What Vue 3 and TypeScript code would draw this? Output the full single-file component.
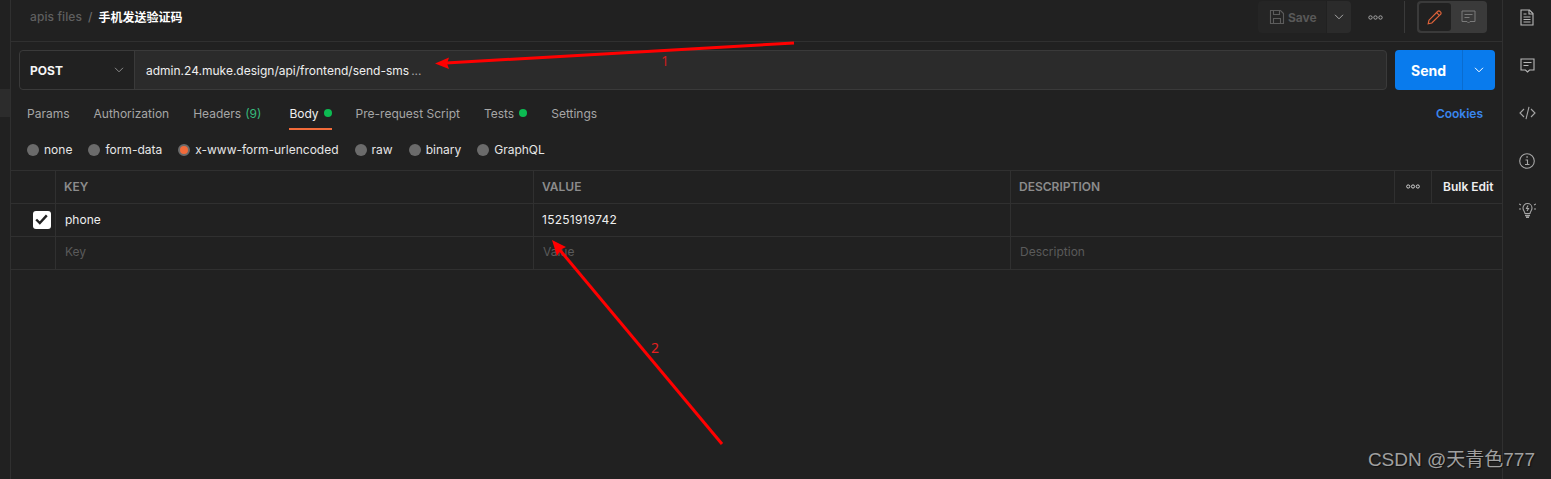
<script setup lang="ts">
const tabs = [
  { label: 'Params' },
  { label: 'Authorization' },
  { label: 'Headers', count: '(9)' },
  { label: 'Body', dot: true, active: true },
  { label: 'Pre-request Script' },
  { label: 'Tests', dot: true },
  { label: 'Settings' },
]
const radios = [
  { label: 'none' },
  { label: 'form-data' },
  { label: 'x-www-form-urlencoded', on: true },
  { label: 'raw' },
  { label: 'binary' },
  { label: 'GraphQL' },
]
</script>

<template>
  <div class="app">
    <aside class="left"><div class="left-mark"></div></aside>

    <main class="main">
      <header class="top">
        <div class="crumbs">
          <span class="crumb-dim">apis files</span>
          <span class="crumb-sep">/</span>
          <span class="crumb-name">手机发送验证码</span>
        </div>
        <div class="actions">
          <div class="save">
            <svg width="16" height="16" viewBox="0 0 16 16" fill="none" stroke="#5c5c5c" stroke-width="1.1">
              <path d="M1.5 1.5h10l3 3v10h-13z" />
              <path d="M4.5 1.5v4h6v-4M4.5 14.5v-5h7v5" />
            </svg>
            <span>Save</span>
          </div>
          <div class="save-more">
            <svg width="10" height="6" viewBox="0 0 10 6" fill="none" stroke="#a6a6a6" stroke-width="1"><path d="M1 .8l4 4 4-4" /></svg>
          </div>
          <svg class="dots" width="15" height="5" viewBox="0 0 15 5" fill="none" stroke="#a6a6a6"><circle cx="2.500" cy="2.500" r="1.700" /><circle cx="7.500" cy="2.500" r="1.700" /><circle cx="12.500" cy="2.500" r="1.700" /></svg>
          <div class="vline"></div>
          <div class="toggle">
            <div class="toggle-on">
              <svg width="16" height="16" viewBox="0 0 16 16" fill="none" stroke="#e0633a" stroke-width="1.200">
                <path d="M1.200 14.800l.8-3.600 8.600-8.700a1.700 1.700 0 0 1 2.500 0l.4.4a1.700 1.700 0 0 1 0 2.500l-8.700 8.600z" />
                <path d="M9.600 3.600l2.800 2.800" />
              </svg>
            </div>
            <div class="toggle-off">
              <svg width="15" height="15" viewBox="0 0 15 15" fill="none" stroke="#7a7a7a" stroke-width="1">
                <path d="M1 1h13v10.500H9L7.500 13 6 11.500H1z" />
                <path d="M3.500 4.500h8M3.500 7.500h5" />
              </svg>
            </div>
          </div>
        </div>
      </header>

      <section class="url-row">
        <div class="url-box">
          <div class="method">
            <span>POST</span>
            <svg width="10" height="6" viewBox="0 0 10 6" fill="none" stroke="#8c8c8c" stroke-width="1"><path d="M1 .8l4 4 4-4" /></svg>
          </div>
          <div class="url-text"><span>admin.24.muke.design/api/frontend/send-sms</span><span class="ellipsis">...</span></div>
        </div>
        <div class="send">
          <div class="send-main">Send</div>
          <div class="send-more">
            <svg width="10" height="6" viewBox="0 0 10 6" fill="none" stroke="#fff" stroke-width="1"><path d="M1 .8l4 4 4-4" /></svg>
          </div>
        </div>
      </section>

      <nav class="tabs">
        <div v-for="t in tabs" :key="t.label" class="tab" :class="{ active: t.active }">
          <span>{{ t.label }}</span>
          <span v-if="t.count" class="count">{{ t.count }}</span>
          <span v-if="t.dot" class="dot"></span>
        </div>
        <div class="cookies">Cookies</div>
      </nav>

      <div class="radios">
        <label v-for="r in radios" :key="r.label" class="radio">
          <span class="knob" :class="{ on: r.on }"></span>{{ r.label }}
        </label>
      </div>

      <div class="table">
        <div class="cell first"></div>
        <div class="cell head key">KEY</div>
        <div class="cell head val">VALUE</div>
        <div class="cell head val">DESCRIPTION</div>
        <div class="cell center">
          <svg width="14" height="5" viewBox="0 0 14 5" fill="none" stroke="#d0d0d0"><circle cx="2.200" cy="2.500" r="1.600" /><circle cx="7" cy="2.500" r="1.600" /><circle cx="11.800" cy="2.500" r="1.600" /></svg>
        </div>
        <div class="cell bulk">Bulk Edit</div>

        <div class="cell first center">
          <span class="check">
            <svg width="13" height="11" viewBox="0 0 13 11" fill="none" stroke="#222" stroke-width="2.400"><path d="M1.200 5.500l3.600 3.600 7-7.700" /></svg>
          </span>
        </div>
        <div class="cell text key">phone</div>
        <div class="cell text val digits">15251919742</div>
        <div class="cell span3"></div>

        <div class="cell first"></div>
        <div class="cell ph key">Key</div>
        <div class="cell ph val">Value</div>
        <div class="cell ph val span3">Description</div>
      </div>
    </main>

    <aside class="right">
      <div class="rail">
        <svg width="14" height="17" viewBox="0 0 14 17" fill="none" stroke="#b8b8b8" stroke-width="1.100">
          <path d="M1 1h8.500L13 4.500V16H1z" /><path d="M9 1v4h4" /><path d="M3.500 5h3M3.500 8h7M3.500 10.500h7M3.500 13h7" />
        </svg>
      </div>
      <div class="rail">
        <svg width="15" height="15" viewBox="0 0 15 15" fill="none" stroke="#b8b8b8" stroke-width="1.100">
          <path d="M1 1h13v11H9.500L7.500 14l-2-2H1z" /><path d="M3.500 4.500h8M3.500 7.500h5" />
        </svg>
      </div>
      <div class="rail">
        <svg width="17" height="14" viewBox="0 0 17 14" fill="none" stroke="#a6a6a6" stroke-width="1.100">
          <path d="M5 3L1 7l4 4M12 3l4 4-4 4M10 .8L7 13.200" />
        </svg>
      </div>
      <div class="rail">
        <svg width="16" height="16" viewBox="0 0 16 16" fill="none" stroke="#a6a6a6" stroke-width="1.100">
          <circle cx="8" cy="8" r="7.300" /><path d="M6.500 7h2v4.500M6 11.500h4.500" /><path d="M7.400 4h1.400" stroke-width="1.600" />
        </svg>
      </div>
      <div class="rail">
        <svg width="17" height="17" viewBox="0 0 17 17" fill="none" stroke="#a6a6a6" stroke-width="1.100">
          <path d="M6 12.500c0-2-2-2.800-2-5.500a4.500 4.500 0 0 1 9 0c0 2.700-2 3.500-2 5.500z" />
          <path d="M6 14.500h5M7 16.300h3" stroke-width="1.500" />
          <path d="M9 4.500L7.500 7.500h2L8 10" />
          <path d="M0 3l2 1M0 8h2M17 3l-2 1M17 8h-2" />
        </svg>
      </div>
    </aside>

    <svg class="overlay" width="1551" height="479" viewBox="0 0 1551 479">
      <g fill="none" stroke="#ff0000" stroke-width="3">
        <path d="M794 43L446 63" />
        <path d="M722 444L559 249" />
      </g>
      <path d="M435 63.500l14-6-2 6 2 5.500z" fill="#ff0000" />
      <path d="M552 240l14 7-5 2.500-4 6.500z" fill="#ff0000" />
      <text x="661" y="66" class="note one">1</text>
      <text x="651" y="353" class="note">2</text>
    </svg>

    <div class="mark">CSDN @天青色777</div>
  </div>
</template>

<style>
html, body { margin: 0; background: #212121; }
</style>

<style scoped>
.app {
  position: relative;
  display: flex;
  width: 1551px;
  height: 479px;
  overflow: hidden;
  background: #212121;
  color: #f0f0f0;
  font-family: Inter, "Noto Sans CJK SC", sans-serif;
  font-size: 12px;
}
.left {
  width: 11px;
  flex: none;
  box-sizing: border-box;
  border-right: 1px solid #303030;
}
.left-mark {
  height: 28px;
  margin-top: 89px;
  background: #2c2c2c;
}
.main {
  flex: 1;
  min-width: 0;
  display: flex;
  flex-direction: column;
}
.right {
  width: 48px;
  flex: none;
  border-left: 1px solid #303030;
  display: flex;
  flex-direction: column;
  align-items: center;
  gap: 24px;
  padding-top: 5px;
}
.rail {
  width: 24px;
  height: 24px;
  display: flex;
  align-items: center;
  justify-content: center;
}
.top {
  height: 41px;
  border-bottom: 1px solid #303030;
  display: flex;
  justify-content: space-between;
  padding: 0 15px 0 19px;
  flex: none;
}
.crumbs {
  display: flex;
  align-items: center;
  gap: 6px;
  height: 33px;
  font-weight: 500;
}
.crumb-dim { color: #5f5f5f; letter-spacing: 0.1px; }
.crumb-sep { color: #6b6b6b; }
.crumb-name { color: #fff; font-weight: 700; }
.actions {
  display: flex;
  align-items: center;
  height: 32px;
  margin-top: 1px;
}
.save {
  width: 68px;
  height: 32px;
  box-sizing: border-box;
  padding-left: 11px;
  display: flex;
  align-items: center;
  gap: 3px;
  background: #252525;
  border-radius: 4px 0 0 4px;
  color: #585858;
  font-weight: 700;
}
.save-more {
  width: 24px;
  height: 32px;
  margin-left: 1px;
  display: flex;
  align-items: center;
  justify-content: center;
  background: #2b2b2b;
  border-radius: 0 4px 4px 0;
}
.dots { margin-left: 17px; }
.vline {
  width: 1px;
  height: 32px;
  background: #3a3a3a;
  margin: 0 12px 0 21px;
}
.toggle {
  width: 70px;
  height: 32px;
  box-sizing: border-box;
  padding: 2px;
  display: flex;
  background: #3a3a3a;
  border-radius: 4px;
}
.toggle-on {
  width: 32px;
  background: #212121;
  border-radius: 3px;
  display: flex;
  align-items: center;
  justify-content: center;
}
.toggle-off {
  flex: 1;
  display: flex;
  align-items: center;
  justify-content: center;
}
.url-row {
  display: flex;
  gap: 8px;
  padding: 8px 7px 0 8px;
  height: 40px;
  flex: none;
}
.url-box {
  flex: 1;
  display: flex;
  box-sizing: border-box;
  border: 1px solid #3a3a3a;
  border-radius: 4px;
  background: #2b2b2b;
}
.method {
  width: 115px;
  flex: none;
  box-sizing: border-box;
  border-right: 1px solid #3a3a3a;
  background: #212121;
  border-radius: 4px 0 0 4px;
  display: flex;
  align-items: center;
  justify-content: space-between;
  padding: 0 10px;
  font-weight: 700;
  color: #f5f5f5;
}
.url-text {
  display: flex;
  align-items: center;
  gap: 2px;
  padding-left: 11px;
  color: #efefef;
  white-space: nowrap;
}
.ellipsis { color: #a6a6a6; }
.send {
  width: 100px;
  display: flex;
  border-radius: 4px;
  background: #097bed;
  flex: none;
}
.send-main {
  width: 67px;
  display: flex;
  align-items: center;
  justify-content: center;
  font-size: 14px;
  font-weight: 700;
  color: #fff;
}
.send-more {
  flex: 1;
  border-left: 1px solid #0a6ccf;
  display: flex;
  align-items: center;
  justify-content: center;
}
.tabs {
  display: flex;
  align-items: flex-start;
  gap: 24px;
  padding: 0 19px 0 16px;
  height: 40px;
  flex: none;
}
.tab {
  display: flex;
  align-items: center;
  gap: 4px;
  height: 40px;
  box-sizing: border-box;
  padding-top: 8px;
  color: #a6a6a6;
  border-bottom: 2px solid transparent;
  white-space: nowrap;
}
.tab.active {
  color: #f0f0f0;
  border-bottom-color: #f26b3a;
}
.count { color: #37b87c; margin-right: 4px; }
.dot {
  width: 8px;
  height: 8px;
  margin-left: 1px;
  border-radius: 50%;
  background: #0cbb52;
}
.cookies {
  margin-left: auto;
  height: 38px;
  box-sizing: border-box;
  padding-top: 8px;
  display: flex;
  align-items: center;
  color: #3a86ee;
  font-weight: 600;
}
.radios {
  display: flex;
  align-items: center;
  gap: 16px;
  height: 40px;
  padding: 0 16px 1px;
  flex: none;
  box-sizing: border-box;
}
.radio {
  display: flex;
  align-items: center;
  gap: 5px;
  color: #e6e6e6;
}
.knob {
  width: 12px;
  height: 12px;
  border-radius: 50%;
  background: #6b6b6b;
  box-sizing: border-box;
}
.knob.on {
  background: #f26b3a;
  border: 2px solid #6b6b6b;
}
.table {
  display: grid;
  grid-template-columns: 44px 478px 477px 384px 37px 71px;
  grid-auto-rows: 33px;
  border-top: 1px solid #303030;
}
.cell {
  box-sizing: border-box;
  border-bottom: 1px solid #303030;
  border-left: 1px solid #303030;
  display: flex;
  align-items: center;
  padding-left: 8px;
  padding-bottom: 1px;
  white-space: nowrap;
}
.cell.first { border-left: 0; }
.key { padding-left: 9px; }
.head.key { padding-left: 8px; }
.head { color: #8c8c8c; font-weight: 600; }
.center { padding-left: 0; justify-content: center; }
.bulk { font-weight: 600; color: #efefef; padding-left: 11px; }
.text { color: #efefef; }
.digits { letter-spacing: 0.25px; }
.val { padding-left: 8px; }
.ph { color: #5a5a5a; padding-left: 9px; padding-bottom: 3px; }
.span3 { grid-column: span 3; }
.check {
  width: 18px;
  height: 18px;
  margin-left: 17px;
  background: #fff;
  border-radius: 3px;
  display: flex;
  align-items: center;
  justify-content: center;
}
.overlay {
  position: absolute;
  left: 0;
  top: 0;
  pointer-events: none;
}
.note {
  fill: #e62020;
  font-family: "Noto Sans", sans-serif;
  font-size: 14px;
}
.note.one { fill: #c81e1e; }
.mark {
  position: absolute;
  right: 16px;
  bottom: 8px;
  color: #a0a0a0;
  font-family: "Liberation Sans", "Noto Sans CJK SC", sans-serif;
  font-size: 19px;
  white-space: nowrap;
  text-shadow: 1px 1px 1px #111;
}
</style>
